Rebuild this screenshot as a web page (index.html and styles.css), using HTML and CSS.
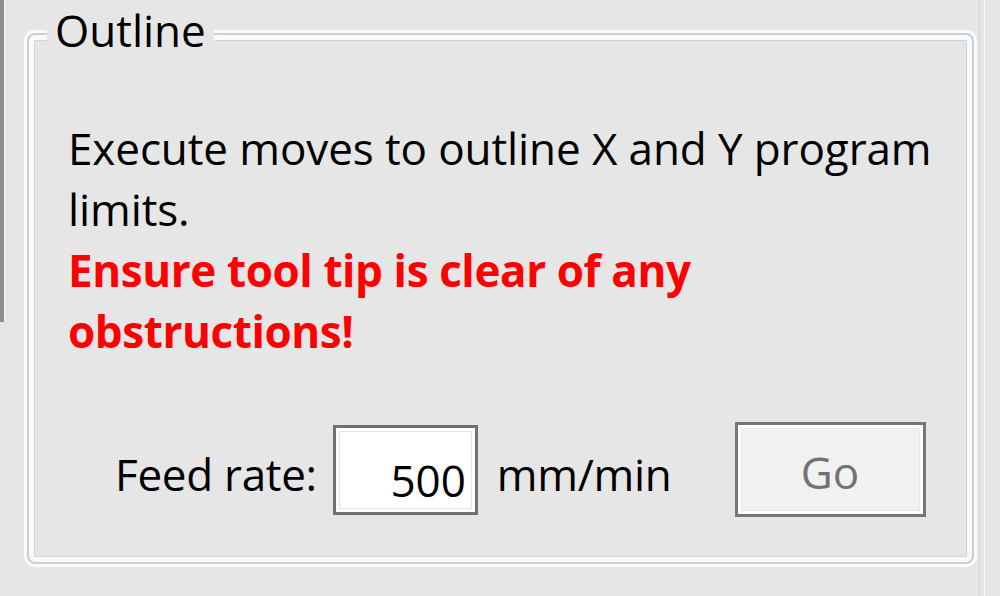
FILE: index.html
```html
<!DOCTYPE html>
<html lang="en">
<head>
    <meta charset="UTF-8">
    <title>Outline</title>
    <link rel="stylesheet" href="styles.css">
</head>
<body>
    <div class="edge"></div>
    <fieldset class="group">
        <legend>Outline</legend>
        <p class="desc">Execute moves to outline X and Y program<br>limits.</p>
        <p class="warn">Ensure tool tip is clear of any<br>obstructions!</p>
        <div class="row">
            <label for="feed" class="lbl">Feed rate:</label>
            <input type="text" id="feed" class="num" value="500">
            <span class="lbl">mm/min</span>
            <button class="go" disabled>Go</button>
        </div>
    </fieldset>
    <div class="side"></div>
</body>
</html>
```

FILE: styles.css
```css
html, body { margin: 0; padding: 0; }
body { width: 1000px; height: 596px; overflow: hidden; background: #e6e6e6; display: flex; align-items: flex-start; font-family: "Open Sans", sans-serif; font-size: 44px; color: #000; }

.edge { width: 4px; height: 322px; background: #8d8d8d; box-shadow: 1px 0 0 #f4f4f4; flex: none; }
.side { width: 4px; height: 596px; margin-left: 5px; border-left: 1px solid #d6d6d6; border-right: 1px solid #f7f7f7; flex: none; }

.group {
    box-sizing: border-box; width: 947px; height: 564px; margin: 0 0 0 23px; flex: none;
    border: 2px solid #c5d2dc; border-radius: 8px; padding: 50px 30px 0 39px;
    box-shadow: 0 0 0 3px #fbfbfb, inset 0 0 0 5px #fafafa, inset 0 0 0 6px #d3d3d3;
}
.group legend { line-height: 60px; padding: 0 8px 8px; margin-left: -21px; background: #e6e6e6; }

.desc, .warn { margin: 0; line-height: 61px; }
.desc { letter-spacing: -0.1px; }
.warn { color: #ff0000; font-weight: bold; letter-spacing: -0.4px; }

.row { display: flex; align-items: center; margin: 60px 0 0 47px; }
.lbl { margin-top: 8px; letter-spacing: -0.3px; }
.row .lbl:first-child { margin-right: 16px; }
.num {
    box-sizing: border-box; width: 145px; height: 90px; margin-right: 19px; flex: none;
    border: 3px solid #717171; box-shadow: inset 0 0 0 3px #fff, inset 0 0 0 4px #e4e4e4;
    background: #fff; padding: 20px 9px 0 0; text-align: right;
    font-family: "Open Sans", sans-serif; font-size: 44px; color: #000; outline: none;
}
.go {
    box-sizing: border-box; width: 191px; height: 95px; margin-left: 63px; flex: none;
    border: 3px solid #767676; box-shadow: inset 0 0 0 3px #fcfcfc, inset 0 0 0 4px #e8e8e8;
    background: #f1f1f1; padding: 4px 0 0; color: #727272;
    font-family: "Open Sans", sans-serif; font-size: 44px;
}
```
